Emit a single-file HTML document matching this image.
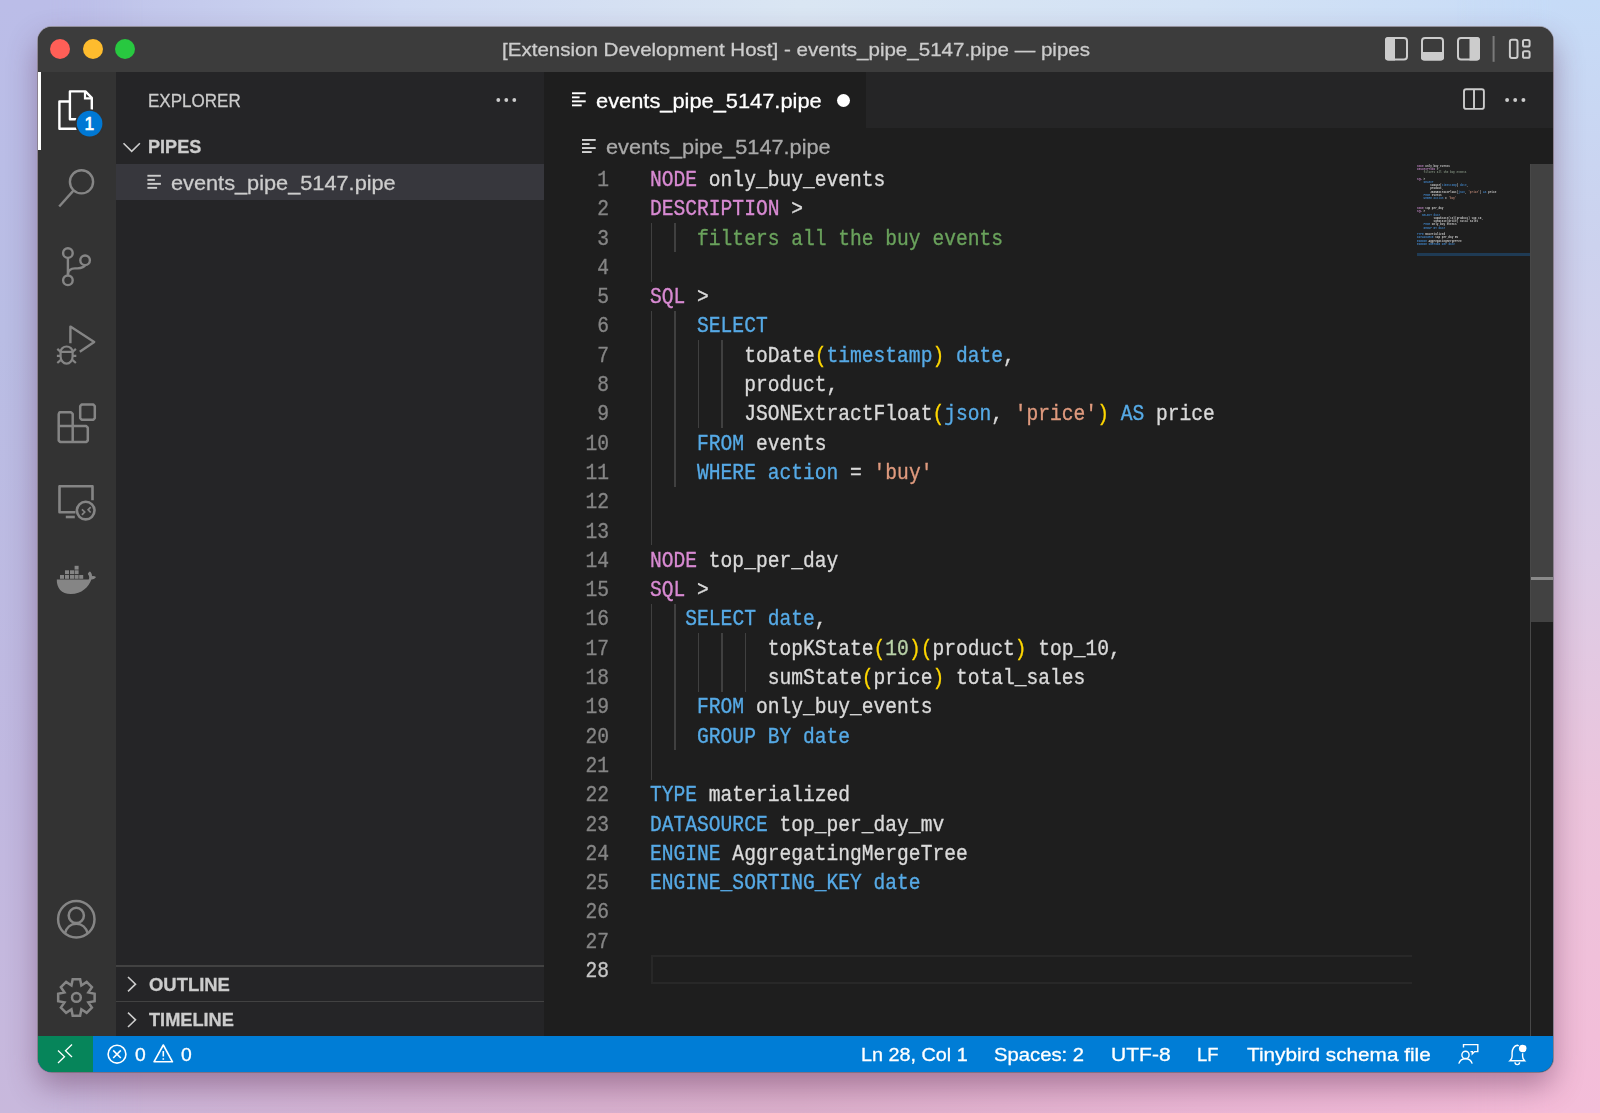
<!DOCTYPE html>
<html><head><meta charset="utf-8">
<style>
*{margin:0;padding:0;box-sizing:border-box}
html,body{width:1600px;height:1113px;overflow:hidden}
body{position:relative;font-family:"Liberation Sans",sans-serif;background:linear-gradient(90deg,#c8b8dc 0%,#d4b2d2 25%,#dcb0cc 50%,#eab6d4 75%,#f4bcd8 100%)}
.bgl{position:absolute;left:0;top:0;width:1600px;height:1113px}
#bgT{background:linear-gradient(90deg,#bbbde8 0%,#cfd9f2 25%,#dae6f3 50%,#d3e2f5 75%,#c6dbf7 100%);-webkit-mask-image:linear-gradient(180deg,#000 0%,#000 3%,rgba(0,0,0,0) 9%)}
#bgL{background:linear-gradient(180deg,#bbbde8 0%,#b9bde4 30%,#c0b8e0 70%,#c8b8dc 100%);-webkit-mask-image:linear-gradient(90deg,#000 0%,#000 3%,rgba(0,0,0,0) 9%)}
#bgR{background:linear-gradient(180deg,#c6dbf7 0%,#ccd2ee 22%,#dccce6 50%,#ecc4dc 72%,#f4bcd8 100%);-webkit-mask-image:linear-gradient(270deg,#000 0%,#000 3%,rgba(0,0,0,0) 9%)}
.a{position:absolute}
#win{position:absolute;left:38px;top:27px;width:1515px;height:1045px;border-radius:14px;overflow:hidden;background:#1e1e1e;
box-shadow:0 14px 30px rgba(90,40,80,.44),0 0 0 1px rgba(150,150,158,.95)}
#pg{position:absolute;left:-38px;top:-27px;width:1600px;height:1113px}
.tl{position:absolute;top:38.6px;width:20px;height:20px;border-radius:50%}
.t{position:absolute;white-space:pre;line-height:1;-webkit-text-stroke:0.3px currentColor}
.code{position:absolute;font-family:"Liberation Mono",monospace;font-size:21.9px;transform:scaleX(0.8957);transform-origin:0 0;-webkit-text-stroke:0.35px currentColor;white-space:pre;color:#dadada;height:29.3px;line-height:29.3px}
.ln{position:absolute;width:80px;font-family:"Liberation Mono",monospace;font-size:21.9px;transform:scaleX(0.8957);transform-origin:100% 0;-webkit-text-stroke:0.35px currentColor;text-align:right;height:29.3px;line-height:29.3px}
.g{position:absolute;width:1.6px;background:#404040}
.cur{position:absolute;border:2.6px solid #282828;border-right:none}
.mt{position:absolute;white-space:pre;font-family:"Liberation Mono",monospace;font-size:2.750px;line-height:3.3px;height:3.3px;font-weight:bold;opacity:0.9}
svg.ov{position:absolute;left:0;top:0;width:1600px;height:1113px;overflow:visible}
#ttext{left:501.60px;top:39.70px;font-size:19.00px;transform:scaleX(1.0810);transform-origin:0 0}
#explorer{left:147.90px;top:90.91px;font-size:19.00px;transform:scaleX(0.8955);transform-origin:0 0}
#pipes{left:147.60px;top:137.90px;font-size:18.40px;transform:scaleX(0.9834);transform-origin:0 0}
#fname{left:171.20px;top:173.00px;font-size:20.80px;transform:scaleX(1.0447);transform-origin:0 0}
#outline{left:148.90px;top:975.50px;font-size:18.40px;transform:scaleX(1.0023);transform-origin:0 0}
#timeline{left:149.00px;top:1011.20px;font-size:18.40px;transform:scaleX(0.9888);transform-origin:0 0}
#tabtext{left:596.00px;top:90.75px;font-size:20.80px;transform:scaleX(1.0492);transform-origin:0 0}
#crumb{left:606.00px;top:136.50px;font-size:20.80px;transform:scaleX(1.0444);transform-origin:0 0}
#st1{left:860.80px;top:1044.70px;font-size:19.00px;transform:scaleX(1.0419);transform-origin:0 0}
#st2{left:994.40px;top:1044.70px;font-size:19.00px;transform:scaleX(1.0653);transform-origin:0 0}
#st3{left:1111.00px;top:1044.70px;font-size:19.00px;transform:scaleX(1.1073);transform-origin:0 0}
#st4{left:1197.00px;top:1044.70px;font-size:19.00px;transform:scaleX(0.9671);transform-origin:0 0}
#st5{left:1246.50px;top:1044.70px;font-size:19.00px;transform:scaleX(1.0920);transform-origin:0 0}
#err0{left:135.00px;top:1044.70px;font-size:19.00px;transform:scaleX(1.0156);transform-origin:0 0}
#warn0{left:181.00px;top:1044.70px;font-size:19.00px;transform:scaleX(1.0156);transform-origin:0 0}
</style></head><body>
<div class="bgl" id="bgT"></div><div class="bgl" id="bgL"></div><div class="bgl" id="bgR"></div>
<div id="win"><div id="pg">
  <!-- title bar -->
  <div class="a" style="left:38px;top:27px;width:1515px;height:45px;background:#3c3c3c"></div>
  <div class="tl" style="left:50.1px;background:#ff5f57"></div>
  <div class="tl" style="left:82.8px;background:#febc2e"></div>
  <div class="tl" style="left:115px;background:#28c840"></div>
  <div class="t" id="ttext" style="color:#cccccc">[Extension Development Host] - events_pipe_5147.pipe — pipes</div>

  <!-- activity bar -->
  <div class="a" style="left:38px;top:72px;width:78px;height:964px;background:#333333"></div>
  <div class="a" style="left:38px;top:72px;width:3px;height:78px;background:#ffffff"></div>

  <!-- sidebar -->
  <div class="a" style="left:116px;top:72px;width:428px;height:964px;background:#252527"></div>
  <div class="a" style="left:116px;top:164px;width:428px;height:36px;background:#37373d"></div>
  <div class="t" id="explorer" style="color:#cccccc">EXPLORER</div>
  <div class="t" id="pipes" style="font-weight:bold;color:#cccccc">PIPES</div>
  <div class="t" id="fname" style="color:#cccccc">events_pipe_5147.pipe</div>
  <div class="a" style="left:116px;top:965px;width:428px;height:1.6px;background:#424242"></div>
  <div class="a" style="left:116px;top:1000.5px;width:428px;height:1.6px;background:#424242"></div>
  <div class="t" id="outline" style="font-weight:bold;color:#cccccc">OUTLINE</div>
  <div class="t" id="timeline" style="font-weight:bold;color:#cccccc">TIMELINE</div>

  <!-- editor tabs -->
  <div class="a" style="left:544px;top:72px;width:1009px;height:56px;background:#252526"></div>
  <div class="a" style="left:544px;top:72px;width:322px;height:56px;background:#1e1e1e"></div>
  <div class="t" id="tabtext" style="color:#ffffff">events_pipe_5147.pipe</div>
  <div class="a" style="left:837.3px;top:93.8px;width:13.2px;height:13.2px;border-radius:50%;background:#ffffff"></div>
  <div class="t" id="crumb" style="color:#a9a9a9">events_pipe_5147.pipe</div>

  <!-- code -->
<div class="code" style="left:649.90px;top:165.90px"><span style="color:#d88ad2">NODE</span> only_buy_events</div>
<div class="ln" style="left:528.80px;top:165.90px;color:#858585">1</div>
<div class="code" style="left:649.90px;top:195.20px"><span style="color:#d88ad2">DESCRIPTION</span> &gt;</div>
<div class="ln" style="left:528.80px;top:195.20px;color:#858585">2</div>
<div class="code" style="left:649.90px;top:224.50px">    <span style="color:#6aa25c">filters all the buy events</span></div>
<div class="ln" style="left:528.80px;top:224.50px;color:#858585">3</div>
<div class="code" style="left:649.90px;top:253.80px"></div>
<div class="ln" style="left:528.80px;top:253.80px;color:#858585">4</div>
<div class="code" style="left:649.90px;top:283.10px"><span style="color:#d88ad2">SQL</span> &gt;</div>
<div class="ln" style="left:528.80px;top:283.10px;color:#858585">5</div>
<div class="code" style="left:649.90px;top:312.40px">    <span style="color:#56aae6">SELECT</span></div>
<div class="ln" style="left:528.80px;top:312.40px;color:#858585">6</div>
<div class="code" style="left:649.90px;top:341.70px">        toDate<span style="color:#ffd700">(</span><span style="color:#56aae6">timestamp</span><span style="color:#ffd700">)</span> <span style="color:#56aae6">date</span>,</div>
<div class="ln" style="left:528.80px;top:341.70px;color:#858585">7</div>
<div class="code" style="left:649.90px;top:371.00px">        product,</div>
<div class="ln" style="left:528.80px;top:371.00px;color:#858585">8</div>
<div class="code" style="left:649.90px;top:400.30px">        JSONExtractFloat<span style="color:#ffd700">(</span><span style="color:#56aae6">json</span>, <span style="color:#df9a7e">&#x27;price&#x27;</span><span style="color:#ffd700">)</span> <span style="color:#56aae6">AS</span> price</div>
<div class="ln" style="left:528.80px;top:400.30px;color:#858585">9</div>
<div class="code" style="left:649.90px;top:429.60px">    <span style="color:#56aae6">FROM</span> events</div>
<div class="ln" style="left:528.80px;top:429.60px;color:#858585">10</div>
<div class="code" style="left:649.90px;top:458.90px">    <span style="color:#56aae6">WHERE</span> <span style="color:#56aae6">action</span> = <span style="color:#df9a7e">&#x27;buy&#x27;</span></div>
<div class="ln" style="left:528.80px;top:458.90px;color:#858585">11</div>
<div class="code" style="left:649.90px;top:488.20px"></div>
<div class="ln" style="left:528.80px;top:488.20px;color:#858585">12</div>
<div class="code" style="left:649.90px;top:517.50px"></div>
<div class="ln" style="left:528.80px;top:517.50px;color:#858585">13</div>
<div class="code" style="left:649.90px;top:546.80px"><span style="color:#d88ad2">NODE</span> top_per_day</div>
<div class="ln" style="left:528.80px;top:546.80px;color:#858585">14</div>
<div class="code" style="left:649.90px;top:576.10px"><span style="color:#d88ad2">SQL</span> &gt;</div>
<div class="ln" style="left:528.80px;top:576.10px;color:#858585">15</div>
<div class="code" style="left:649.90px;top:605.40px">   <span style="color:#56aae6">SELECT</span> <span style="color:#56aae6">date</span>,</div>
<div class="ln" style="left:528.80px;top:605.40px;color:#858585">16</div>
<div class="code" style="left:649.90px;top:634.70px">          topKState<span style="color:#ffd700">(</span><span style="color:#b9d2a8">10</span><span style="color:#ffd700">)</span><span style="color:#ffd700">(</span>product<span style="color:#ffd700">)</span> top_10,</div>
<div class="ln" style="left:528.80px;top:634.70px;color:#858585">17</div>
<div class="code" style="left:649.90px;top:664.00px">          sumState<span style="color:#ffd700">(</span>price<span style="color:#ffd700">)</span> total_sales</div>
<div class="ln" style="left:528.80px;top:664.00px;color:#858585">18</div>
<div class="code" style="left:649.90px;top:693.30px">    <span style="color:#56aae6">FROM</span> only_buy_events</div>
<div class="ln" style="left:528.80px;top:693.30px;color:#858585">19</div>
<div class="code" style="left:649.90px;top:722.60px">    <span style="color:#56aae6">GROUP BY</span> <span style="color:#56aae6">date</span></div>
<div class="ln" style="left:528.80px;top:722.60px;color:#858585">20</div>
<div class="code" style="left:649.90px;top:751.90px"></div>
<div class="ln" style="left:528.80px;top:751.90px;color:#858585">21</div>
<div class="code" style="left:649.90px;top:781.20px"><span style="color:#56aae6">TYPE</span> materialized</div>
<div class="ln" style="left:528.80px;top:781.20px;color:#858585">22</div>
<div class="code" style="left:649.90px;top:810.50px"><span style="color:#56aae6">DATASOURCE</span> top_per_day_mv</div>
<div class="ln" style="left:528.80px;top:810.50px;color:#858585">23</div>
<div class="code" style="left:649.90px;top:839.80px"><span style="color:#56aae6">ENGINE</span> AggregatingMergeTree</div>
<div class="ln" style="left:528.80px;top:839.80px;color:#858585">24</div>
<div class="code" style="left:649.90px;top:869.10px"><span style="color:#56aae6">ENGINE_SORTING_KEY</span> <span style="color:#56aae6">date</span></div>
<div class="ln" style="left:528.80px;top:869.10px;color:#858585">25</div>
<div class="code" style="left:649.90px;top:898.40px"></div>
<div class="ln" style="left:528.80px;top:898.40px;color:#858585">26</div>
<div class="code" style="left:649.90px;top:927.70px"></div>
<div class="ln" style="left:528.80px;top:927.70px;color:#858585">27</div>
<div class="code" style="left:649.90px;top:957.00px"></div>
<div class="ln" style="left:528.80px;top:957.00px;color:#c6c6c6">28</div>
<div class="g" style="left:650.70px;top:223.00px;height:58.60px"></div>
<div class="g" style="left:674.24px;top:223.00px;height:29.30px"></div>
<div class="g" style="left:650.70px;top:310.90px;height:234.40px"></div>
<div class="g" style="left:674.24px;top:310.90px;height:175.80px"></div>
<div class="g" style="left:697.78px;top:340.20px;height:87.90px"></div>
<div class="g" style="left:721.32px;top:340.20px;height:87.90px"></div>
<div class="g" style="left:650.70px;top:603.90px;height:175.80px"></div>
<div class="g" style="left:674.24px;top:603.90px;height:146.50px"></div>
<div class="g" style="left:697.78px;top:633.20px;height:58.60px"></div>
<div class="g" style="left:721.32px;top:633.20px;height:58.60px"></div>
<div class="g" style="left:744.86px;top:633.20px;height:58.60px"></div>
<div class="cur" style="left:651.00px;top:955.20px;width:761.00px;height:29.30px"></div>

  <!-- minimap + scrollbar -->
<div class="mt" style="left:1417.00px;top:164.50px"><span style="color:#b07ab4">NODE</span><span style="color:#d8d8d8"> only_buy_events</span></div>
<div class="mt" style="left:1417.00px;top:167.77px"><span style="color:#b07ab4">DESCRIPTION</span><span style="color:#d8d8d8"> &gt;</span></div>
<div class="mt" style="left:1417.00px;top:171.04px"><span style="color:#d8d8d8">    </span><span style="color:#8a9a88">filters all the buy events</span></div>
<div class="mt" style="left:1417.00px;top:177.58px"><span style="color:#b07ab4">SQL</span><span style="color:#d8d8d8"> &gt;</span></div>
<div class="mt" style="left:1417.00px;top:180.85px"><span style="color:#d8d8d8">    </span><span style="color:#3f82c4">SELECT</span></div>
<div class="mt" style="left:1417.00px;top:184.12px"><span style="color:#d8d8d8">        toDate</span><span style="color:#c8c8c8">(</span><span style="color:#3f82c4">timestamp</span><span style="color:#c8c8c8">)</span><span style="color:#d8d8d8"> </span><span style="color:#3f82c4">date</span><span style="color:#d8d8d8">,</span></div>
<div class="mt" style="left:1417.00px;top:187.39px"><span style="color:#d8d8d8">        product,</span></div>
<div class="mt" style="left:1417.00px;top:190.66px"><span style="color:#d8d8d8">        JSONExtractFloat</span><span style="color:#c8c8c8">(</span><span style="color:#3f82c4">json</span><span style="color:#d8d8d8">, </span><span style="color:#c08a78">&#x27;price&#x27;</span><span style="color:#c8c8c8">)</span><span style="color:#d8d8d8"> </span><span style="color:#3f82c4">AS</span><span style="color:#d8d8d8"> price</span></div>
<div class="mt" style="left:1417.00px;top:193.93px"><span style="color:#d8d8d8">    </span><span style="color:#3f82c4">FROM</span><span style="color:#d8d8d8"> events</span></div>
<div class="mt" style="left:1417.00px;top:197.20px"><span style="color:#d8d8d8">    </span><span style="color:#3f82c4">WHERE</span><span style="color:#d8d8d8"> </span><span style="color:#3f82c4">action</span><span style="color:#d8d8d8"> = </span><span style="color:#c08a78">&#x27;buy&#x27;</span></div>
<div class="mt" style="left:1417.00px;top:207.01px"><span style="color:#b07ab4">NODE</span><span style="color:#d8d8d8"> top_per_day</span></div>
<div class="mt" style="left:1417.00px;top:210.28px"><span style="color:#b07ab4">SQL</span><span style="color:#d8d8d8"> &gt;</span></div>
<div class="mt" style="left:1417.00px;top:213.55px"><span style="color:#d8d8d8">   </span><span style="color:#3f82c4">SELECT</span><span style="color:#d8d8d8"> </span><span style="color:#3f82c4">date</span><span style="color:#d8d8d8">,</span></div>
<div class="mt" style="left:1417.00px;top:216.82px"><span style="color:#d8d8d8">          topKState</span><span style="color:#c8c8c8">(</span><span style="color:#c8c8c8">10</span><span style="color:#c8c8c8">)</span><span style="color:#c8c8c8">(</span><span style="color:#d8d8d8">product</span><span style="color:#c8c8c8">)</span><span style="color:#d8d8d8"> top_10,</span></div>
<div class="mt" style="left:1417.00px;top:220.09px"><span style="color:#d8d8d8">          sumState</span><span style="color:#c8c8c8">(</span><span style="color:#d8d8d8">price</span><span style="color:#c8c8c8">)</span><span style="color:#d8d8d8"> total_sales</span></div>
<div class="mt" style="left:1417.00px;top:223.36px"><span style="color:#d8d8d8">    </span><span style="color:#3f82c4">FROM</span><span style="color:#d8d8d8"> only_buy_events</span></div>
<div class="mt" style="left:1417.00px;top:226.63px"><span style="color:#d8d8d8">    </span><span style="color:#3f82c4">GROUP BY</span><span style="color:#d8d8d8"> </span><span style="color:#3f82c4">date</span></div>
<div class="mt" style="left:1417.00px;top:233.17px"><span style="color:#3f82c4">TYPE</span><span style="color:#d8d8d8"> materialized</span></div>
<div class="mt" style="left:1417.00px;top:236.44px"><span style="color:#3f82c4">DATASOURCE</span><span style="color:#d8d8d8"> top_per_day_mv</span></div>
<div class="mt" style="left:1417.00px;top:239.71px"><span style="color:#3f82c4">ENGINE</span><span style="color:#d8d8d8"> AggregatingMergeTree</span></div>
<div class="mt" style="left:1417.00px;top:242.98px"><span style="color:#3f82c4">ENGINE_SORTING_KEY</span><span style="color:#d8d8d8"> </span><span style="color:#3f82c4">date</span></div><div class="a" style="left:1417.00px;top:252.79px;width:113.00px;height:3.27px;background:#1f3b55"></div>
  <div class="a" style="left:1530px;top:164px;width:1.2px;height:872px;background:#484848"></div>
  <div class="a" style="left:1531px;top:164px;width:22px;height:458px;background:#424242"></div>
  <div class="a" style="left:1531px;top:577px;width:22px;height:3px;background:#8a8a8a"></div>

  <!-- status bar -->
  <div class="a" style="left:38px;top:1036px;width:1515px;height:36px;background:#007dd6"></div>
  <div class="a" style="left:38px;top:1036px;width:54.5px;height:36px;background:#06855a"></div>
  <div class="t" id="err0" style="color:#ffffff">0</div>
  <div class="t" id="warn0" style="color:#ffffff">0</div>
  <div class="t" id="st1" style="color:#ffffff">Ln 28, Col 1</div>
  <div class="t" id="st2" style="color:#ffffff">Spaces: 2</div>
  <div class="t" id="st3" style="color:#ffffff">UTF-8</div>
  <div class="t" id="st4" style="color:#ffffff">LF</div>
  <div class="t" id="st5" style="color:#ffffff">Tinybird schema file</div>

  <!-- icons overlay -->
  <svg class="ov" viewBox="0 0 1600 1113">
    <!-- title bar layout icons -->
    <g fill="none" stroke="#cccccc" stroke-width="2">
      <rect x="1386" y="38" width="21" height="21.4" rx="3"/>
      <rect x="1422" y="38" width="21" height="21.4" rx="3"/>
      <rect x="1458" y="38" width="21" height="21.4" rx="3"/>
      <rect x="1509.9" y="39.8" width="7.6" height="18.2" rx="2"/>
      <rect x="1523" y="40" width="6.6" height="6.6" rx="1.6"/>
      <rect x="1523" y="51.2" width="6.6" height="6.6" rx="1.6"/>
    </g>
    <g fill="#cccccc">
      <path d="M1388 37 h7 v23.4 h-7 a3 3 0 0 1 -3 -3 v-17.4 a3 3 0 0 1 3 -3z"/>
      <path d="M1421 52 h23 v5.4 a3 3 0 0 1 -3 3 h-17 a3 3 0 0 1 -3 -3z"/>
      <path d="M1469.5 37 h7.5 a3 3 0 0 1 3 3 v17.4 a3 3 0 0 1 -3 3 h-7.5z"/>
      <rect x="1492.6" y="36" width="2" height="25.8" fill="#7a7a7a"/>
    </g>
    <!-- explorer files icon -->
    <g fill="none" stroke="#ffffff" stroke-width="2.4" stroke-linejoin="round">
      <path d="M69.9 91.4 h15.5 l6.4 6.4 v21.5 h-21.9z"/>
      <path d="M69.9 101.5 h-10.5 v27.3 h18.2 v-9.5"/>
    </g>
    <path d="M85 91.4 v7 h7" fill="none" stroke="#ffffff" stroke-width="2.2"/>
    <circle cx="89.6" cy="123.6" r="14.4" fill="#333333"/>
    <circle cx="89.6" cy="123.6" r="12.8" fill="#0078d4"/>
    <text x="89.4" y="130.2" font-family="Liberation Sans" font-size="17.5" fill="#ffffff" stroke="#ffffff" stroke-width="0.7" text-anchor="middle">1</text>
    <!-- search -->
    <g fill="none" stroke="#858585" stroke-width="2.4">
      <circle cx="81.5" cy="181.8" r="11.6"/>
      <path d="M73.4 190.6 L59.2 206.5"/>
    </g>
    <!-- source control -->
    <g fill="none" stroke="#858585" stroke-width="2.4">
      <circle cx="67.9" cy="253.1" r="4.8"/>
      <circle cx="67.9" cy="280.3" r="4.8"/>
      <circle cx="85.1" cy="260.3" r="4.8"/>
      <path d="M67.9 257.9 v17.6"/>
      <path d="M67.9 274 c0.5 -4 3 -5.5 7 -5.6 h2.6 c4.5 0 7.2 -2.2 7.6 -3.3"/>
    </g>
    <!-- run & debug -->
    <g fill="none" stroke="#858585" stroke-width="2.4" stroke-linejoin="round">
      <path d="M70.4 343.3 V326.6 L94.2 341.9 L79.8 351.8"/>
    </g>
    <g fill="none" stroke="#858585" stroke-width="2.2">
      <path d="M60.6 351.8 A6 5.3 0 0 1 72.6 351.8 V356.4 A6 7.3 0 0 1 60.6 356.4 Z M60.6 351.8 H72.6"/>
      <path d="M57.3 348.9 l3.4 2.9 M75.9 348.9 l-3.4 2.9 M56.9 355.9 h3.7 M76.3 355.9 h-3.7 M57.3 363 l3.3 -2.8 M75.9 363 l-3.3 -2.8"/>
    </g>
    <!-- extensions -->
    <g fill="none" stroke="#858585" stroke-width="2.5" stroke-linejoin="bevel">
      <path d="M81.8 404.5 h11.4 l1.6 1.6 v12.1 l-1.6 1.6 h-11.4 l-1.6 -1.6 v-12.1z"/>
      <path d="M59.5 412.3 h11.6 l1.6 1.6 v12.2 h13.5 l1.6 1.6 v12.8 l-1.6 1.6 h-25.9 l-1.6 -1.6 v-26.2z"/>
      <path d="M58.3 426.1 h14.4 v15.6"/>
    </g>
    <!-- remote explorer -->
    <g fill="none" stroke="#858585" stroke-width="2.6">
      <path d="M75.5 512.2 h-16 v-26 h33 v14" stroke-linejoin="round"/>
      <path d="M65.8 517 h9"/>
      <circle cx="85.7" cy="510.6" r="8.8"/>
      <path d="M81.9 509.4 l2.8 2.6 l-2.8 2.9 M90.7 507.1 l-2.6 2.7 l2.6 2.7" stroke-width="1.7"/>
    </g>
    <!-- docker -->
    <g fill="#858585">
      <rect x="60" y="575" width="4" height="3.8"/><rect x="65" y="575" width="4" height="3.8"/><rect x="70" y="575" width="4" height="3.8"/><rect x="74.6" y="575" width="4" height="3.8"/><rect x="79.2" y="575" width="4" height="3.8"/>
      <rect x="65" y="570.3" width="4" height="3.8"/><rect x="70" y="570.3" width="4" height="3.8"/><rect x="74.6" y="570.3" width="4" height="3.8"/>
      <rect x="74.6" y="565.8" width="4" height="3.8"/>
      <path d="M56.8 579.6 h31.8 c1 -1.2 0.9 -3.5 -0.8 -5.6 c0.6 -1.6 1.6 -2.3 2.2 -2.6 c1.4 1.4 2.2 3 2 4.8 c1.6 -0.3 3 0 4 0.9 c-0.8 1.6 -2.4 2.4 -4.6 2.4 c-2.8 7.5 -9.6 14.6 -20.5 14.6 c-9.5 0 -14.4 -6 -14.1 -14.5z"/>
    </g>
    <!-- account -->
    <g fill="none" stroke="#858585" stroke-width="2.5">
      <circle cx="76.3" cy="919.2" r="18.2"/>
      <circle cx="76.3" cy="915.4" r="7.6"/>
      <path d="M64.8 933.6 c1.6 -6 6 -9.8 11.5 -9.8 c5.5 0 9.9 3.8 11.5 9.8"/>
    </g>
    <!-- gear -->
    <g fill="none" stroke="#858585" stroke-width="2.5" stroke-linejoin="miter">
      <path d="M72.69 979.17 L80.11 979.17 L81.34 985.48 L86.67 981.89 L91.91 987.13 L88.32 992.46 L94.63 993.69 L94.63 1001.11 L88.32 1002.34 L91.91 1007.67 L86.67 1012.91 L81.34 1009.32 L80.11 1015.63 L72.69 1015.63 L71.46 1009.32 L66.13 1012.91 L60.89 1007.67 L64.48 1002.34 L58.17 1001.11 L58.17 993.69 L64.48 992.46 L60.89 987.13 L66.13 981.89 L71.46 985.48Z"/>
      <circle cx="76.4" cy="997.4" r="4.4"/>
    </g>
    <!-- sidebar icons -->
    <g fill="none" stroke="#cccccc" stroke-width="1.6">
      <path d="M505.5 100 h0.01 M498.5 100 h0.01" />
    </g>
    <g fill="#cccccc">
      <circle cx="498.3" cy="100" r="1.9"/><circle cx="506.3" cy="100" r="1.9"/><circle cx="514.3" cy="100" r="1.9"/>
    </g>
    <path d="M123.5 143.2 L131.7 151.4 L139.9 143.2" fill="none" stroke="#cccccc" stroke-width="1.6"/>
    <path d="M128 977 L135.5 984.2 L128 991.4 M128 1012.6 L135.5 1019.8 L128 1027" fill="none" stroke="#cccccc" stroke-width="1.6"/>
    <g fill="#cccccc">
      <rect x="147.4" y="174.8" width="13.5" height="1.9"/><rect x="147.4" y="178.9" width="7.5" height="1.9"/><rect x="147.4" y="182.9" width="13.5" height="1.9"/><rect x="147.4" y="186.9" width="9.7" height="1.9"/>
    </g>
    <g fill="#ffffff">
      <rect x="572" y="92.3" width="13.7" height="1.9"/><rect x="572" y="96.4" width="7.6" height="1.9"/><rect x="572" y="100.4" width="13.7" height="1.9"/><rect x="572" y="104.4" width="9.7" height="1.9"/>
    </g>
    <g fill="#d4d4d4">
      <rect x="582" y="139" width="13.7" height="1.9"/><rect x="582" y="143.1" width="7.6" height="1.9"/><rect x="582" y="147.1" width="13.7" height="1.9"/><rect x="582" y="151.1" width="9.7" height="1.9"/>
    </g>
    <!-- editor actions -->
    <g fill="none" stroke="#cccccc" stroke-width="1.9">
      <rect x="1464" y="89.2" width="19.9" height="19.7" rx="2.2"/>
      <path d="M1474 89.2 v19.7"/>
    </g>
    <g fill="#cccccc">
      <circle cx="1507.1" cy="100" r="1.95"/><circle cx="1515.2" cy="100" r="1.95"/><circle cx="1523.4" cy="100" r="1.95"/>
    </g>
    <!-- status bar icons -->
    <g fill="none" stroke="#ffffff" stroke-width="1.3">
      <path d="M58 1050.5 L64.5 1056.7 L58 1063 M72 1044.5 L65.5 1050.7 L72 1057"/>
    </g>
    <g fill="none" stroke="#ffffff" stroke-width="1.6">
      <circle cx="117" cy="1054.2" r="8.9"/>
      <path d="M113.2 1050.4 l7.6 7.6 M120.8 1050.4 l-7.6 7.6"/>
      <path d="M163.3 1045 L172.5 1061.8 H154 Z" stroke-linejoin="round"/>
      <path d="M163.3 1051 v5.5 M163.3 1058.3 v1.4"/>
    </g>
    <g fill="none" stroke="#ffffff" stroke-width="1.4">
      <circle cx="1465.5" cy="1054.9" r="3.6"/>
      <path d="M1458.8 1063.6 c1 -3 3.5 -4.8 6.7 -4.8 c3.2 0 5.7 1.8 6.7 4.8"/>
      <path d="M1463.5 1047.6 v-3 h14.3 v7 h-3.2 l-2.3 2.3 v-2.3 h-1.8"/>
      <path d="M1510 1060.8 h14.6 c-1.3 -1.2 -2 -2.6 -2 -4.5 v-3.6 c0 -3.7 -2.4 -6.9 -5.3 -7.4 c-3 0.4 -5.2 3.6 -5.2 7.4 v3.6 c0 1.9 -0.7 3.3 -2.1 4.5z"/>
      <path d="M1515 1062.3 a2.3 2.3 0 0 0 4.6 0"/>
    </g>
    <circle cx="1522.7" cy="1048.5" r="4.8" fill="#007dd6"/>
    <circle cx="1522.7" cy="1048.5" r="3.8" fill="#ffffff"/>

  </svg>
</div></div>
</body></html>
